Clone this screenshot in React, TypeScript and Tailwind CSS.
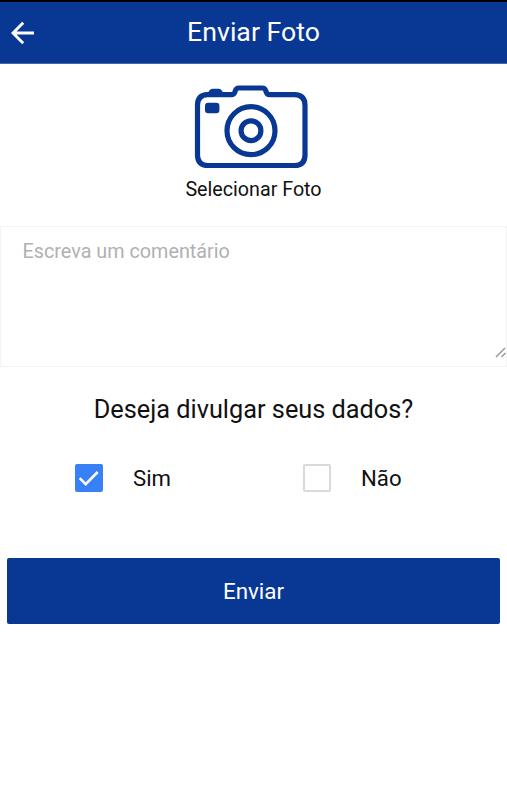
import React, { useState } from 'react';

const CameraIcon: React.FC = () => (
  <svg width="116" height="86" viewBox="0 0 116 86" fill="none" stroke="#083893" strokeWidth="5.2">
    <path d="M14.5 10.7H38.5C41.5 10.7 41.5 9 42.3 6.8C43 4.8 43.5 4 45.5 4H69.5C71.5 4 72 4.8 72.8 6.8C73.6 9 73.8 10.7 76.5 10.7H101.5Q112 11 112 21.5V71Q112 81.5 101.5 81.5H15Q4.5 81.5 4.5 71V21.5Q4.5 11 14.5 10.7Z" />
    <circle cx="58" cy="46.7" r="24" />
    <circle cx="58" cy="46.7" r="9.9" />
    <path d="M14.5 10C16 6 18 4.8 20.5 4.8H25C27.5 4.8 29 6 30.5 10Z" fill="#083893" stroke="none" />
    <rect x="12" y="18.7" width="14.4" height="10.6" rx="3" fill="#083893" stroke="none" />
  </svg>
);

interface OptionProps {
  label: string;
  checked: boolean;
  onClick: () => void;
}

const Option: React.FC<OptionProps> = ({ label, checked, onClick }) => (
  <button
    type="button"
    role="checkbox"
    aria-checked={checked}
    onClick={onClick}
    className="flex w-[228px] shrink-0 items-center gap-[30px] text-left"
  >
    {checked ? (
      <span className="flex h-7 w-[28px] items-center justify-center rounded-[2px] bg-[#3880f6]">
        <svg width="28" height="28" viewBox="0 0 28 28" fill="none" stroke="#fff" strokeWidth="2.6">
          <path d="M4.7 14.2L10.7 20.2L22.7 8" />
        </svg>
      </span>
    ) : (
      <span className="h-7 w-[28px] rounded-[2px] border-2 border-[#dadada] bg-white" />
    )}
    <span className="text-[22.2px] leading-7">{label}</span>
  </button>
);

const App: React.FC = () => {
  const [comment, setComment] = useState('');
  const [share, setShare] = useState(true);

  return (
    <div className="flex h-[800px] w-full flex-col overflow-hidden bg-white font-['Roboto',sans-serif] text-[#111]">
      <header className="grid h-16 shrink-0 grid-cols-[46px_1fr_46px] items-center border-t-2 border-b border-t-black border-b-[#4468ad] bg-[#083893] text-white">
        <button type="button" aria-label="Voltar" className="pt-px pl-[11px]">
          <svg width="24" height="24" viewBox="0 0 24 24" fill="none" stroke="#fff" strokeWidth="2.9">
            <path d="M23 12H2.5M12.2 1.8L2 12L12.2 22.2" />
          </svg>
        </button>
        <h1 className="pb-0.5 text-center text-[26.7px] leading-8">Enviar Foto</h1>
      </header>

      <button type="button" className="mx-auto flex h-[162px] shrink-0 flex-col items-center pt-5">
        <span className="-ml-[5px]">
          <CameraIcon />
        </span>
        <span className="mt-2 text-[19.7px] leading-6">Selecionar Foto</span>
      </button>

      <div className="relative h-[141px] shrink-0 border border-[#f3f3f3]">
        <textarea
          value={comment}
          onChange={(e) => setComment(e.target.value)}
          placeholder="Escreva um comentário"
          className="block h-full w-full resize-none px-[21.5px] py-[13px] text-[19.8px] leading-6 outline-none placeholder:text-[#b1b1b1]"
        />
        <svg className="pointer-events-none absolute right-0 bottom-2 h-[11px] w-[11px]" viewBox="0 0 11 11" fill="none" stroke="#999" strokeWidth="1.5">
          <path d="M1 10L10 1M6.5 10L10.5 6" />
        </svg>
      </div>

      <h2 className="mt-[27px] text-center text-[25.3px] leading-8">Deseja divulgar seus dados?</h2>

      <div className="mt-[38px] flex pl-[75px]">
        <Option label="Sim" checked={share} onClick={() => setShare(true)} />
        <Option label="Não" checked={!share} onClick={() => setShare(false)} />
      </div>

      <div className="mt-[66px] px-[7px]">
        <button type="button" className="h-[66px] w-full rounded-[2px] bg-[#083893] pt-px text-[22.4px] text-white">
          Enviar
        </button>
      </div>
    </div>
  );
};

export default App;
